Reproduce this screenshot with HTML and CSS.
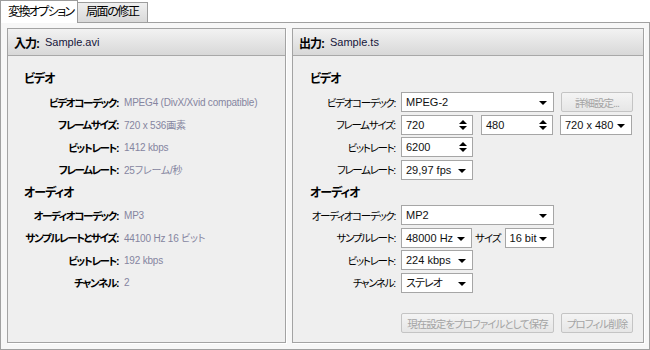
FILE: index.html
```html
<!DOCTYPE html>
<html lang="ja">
<head>
  <meta charset="UTF-8">
  <title>変換オプション</title>
  <link rel="stylesheet" href="styles.css">
</head>
<body>

<div class="tabs">
  <div class="tab active">変換オプション</div>
  <div class="tab">局面の修正</div>
</div>

<div class="page">

  <!-- 入力 -->
  <section class="panel panel-in">
    <div class="panel-head"><b class="jp">入力:</b><span class="file">Sample.avi</span></div>
    <div class="panel-body">
      <div class="sec-title jp">ビデオ</div>
      <div class="row"><span class="lbl jp">ビデオコーデック:</span><span class="val">MPEG4 (DivX/Xvid compatible)</span></div>
      <div class="row"><span class="lbl jp">フレームサイズ:</span><span class="val">720 x 536画素</span></div>
      <div class="row"><span class="lbl jp">ビットレート:</span><span class="val">1412 kbps</span></div>
      <div class="row"><span class="lbl jp">フレームレート:</span><span class="val">25フレーム/秒</span></div>
      <div class="sec-title jp">オーディオ</div>
      <div class="row"><span class="lbl jp">オーディオコーデック:</span><span class="val">MP3</span></div>
      <div class="row"><span class="lbl jp">サンプルレートとサイズ:</span><span class="val">44100 Hz 16 ビット</span></div>
      <div class="row"><span class="lbl jp">ビットレート:</span><span class="val">192 kbps</span></div>
      <div class="row"><span class="lbl jp">チャンネル:</span><span class="val">2</span></div>
    </div>
  </section>

  <!-- 出力 -->
  <section class="panel panel-out">
    <div class="panel-head"><b class="jp">出力:</b><span class="file">Sample.ts</span></div>
    <div class="panel-body">
      <div class="sec-title jp">ビデオ</div>
      <div class="row">
        <span class="lbl jp">ビデオコーデック:</span>
        <div class="combo w-full">MPEG-2<i class="arrow"></i></div>
        <button class="btn jp w-short" disabled>詳細設定...</button>
      </div>
      <div class="row">
        <span class="lbl jp">フレームサイズ:</span>
        <div class="spin w-short">720<i class="spin-arrows"></i></div>
        <div class="spin w-short gap8">480<i class="spin-arrows"></i></div>
        <div class="combo w-short">720 x 480<i class="arrow"></i></div>
      </div>
      <div class="row">
        <span class="lbl jp">ビットレート:</span>
        <div class="spin w-short">6200<i class="spin-arrows"></i></div>
      </div>
      <div class="row">
        <span class="lbl jp">フレームレート:</span>
        <div class="combo w-short">29,97 fps<i class="arrow"></i></div>
      </div>
      <div class="sec-title jp">オーディオ</div>
      <div class="row">
        <span class="lbl jp">オーディオコーデック:</span>
        <div class="combo w-full">MP2<i class="arrow"></i></div>
      </div>
      <div class="row">
        <span class="lbl jp">サンプルレート:</span>
        <div class="combo w-rate">48000 Hz<i class="arrow"></i></div>
        <span class="inline-lbl jp">サイズ</span>
        <div class="combo w-bits">16 bit<i class="arrow"></i></div>
      </div>
      <div class="row">
        <span class="lbl jp">ビットレート:</span>
        <div class="combo w-short">224 kbps<i class="arrow"></i></div>
      </div>
      <div class="row">
        <span class="lbl jp">チャンネル:</span>
        <div class="combo w-short"><span class="jp">ステレオ</span><i class="arrow"></i></div>
      </div>
      <div class="actions">
        <button class="btn jp w-full" disabled>現在設定をプロファイルとして保存</button>
        <button class="btn jp w-short" disabled>プロフィル削除</button>
      </div>
    </div>
  </section>

</div>

</body>
</html>
```

FILE: styles.css
```css
body {
  margin: 0;
  font-family: "Liberation Sans", "Noto Sans CJK JP", sans-serif;
  font-size: 11px;
  font-feature-settings: "palt";
  color: #000;
  background: #fff;
}

/* Japanese text is set tighter, like the UI font of the original */
.jp {
  letter-spacing: -1px;
  white-space: nowrap;
}

/* Tabs */
.tabs {
  display: flex;
  align-items: flex-end;
  height: 22px;
}

.tab {
  box-sizing: border-box;
  height: 20px;
  width: 71px;
  padding-left: 8px;
  line-height: 19px;
  font-size: 12px;
  letter-spacing: -1.4px;
  white-space: nowrap;
  border: 1px solid #9c9c9c;
  border-bottom: none;
  background: linear-gradient(#efefef, #d9d9d9);
  margin-left: -1px;
}

.tab.active {
  width: 78px;
  height: 23px;
  padding-left: 7px;
  margin-left: 0;
  margin-bottom: -1px;
  line-height: 23px;
  letter-spacing: -1.6px;
  background: #fff;
  position: relative;
  z-index: 1;
}

/* Page frame */
.page {
  box-sizing: border-box;
  height: 328px;
  border: 1px solid #a0a0a0;
  background: #f7f7f7;
  padding: 5px 5px 6px 6px;
  display: flex;
  gap: 6px;
}

.panel {
  box-sizing: border-box;
  border: 1px solid #a3a3a3;
  background: #efefef;
  box-shadow: 1px 1px 0 #fff;
}

.panel-in { width: 279px; }
.panel-out { flex: 1; }

.panel-head {
  box-sizing: border-box;
  height: 27px;
  display: flex;
  align-items: center;
  gap: 6px;
  padding-left: 6px;
  border-bottom: 1px solid #a8a8a8;
  background: linear-gradient(#f2f2f2, #d8d8d8);
}

.panel-head b {
  font-size: 12px;
}

.panel-head .file {
  color: #15153a;
}

.panel-body {
  padding-top: 12px;
}

.sec-title {
  height: 22px;
  line-height: 22px;
  padding-left: 16px;
  font-weight: bold;
  font-size: 12px;
  margin-bottom: 1px;
}

.panel-out .sec-title {
  padding-left: 17px;
}

.row {
  display: flex;
  align-items: center;
  height: 22.5px;
}

.row + .sec-title {
  margin-top: 1px;
  margin-bottom: 0;
}

.lbl {
  flex: none;
  text-align: right;
  margin-right: 6px;
  font-size: 10.5px;
  letter-spacing: -1.3px;
}

.panel-in .lbl {
  width: 110px;
  font-weight: bold;
  letter-spacing: -1.4px;
}

.panel-out .lbl {
  width: 102px;
}

.val {
  color: #8585a0;
  font-size: 10px;
  letter-spacing: -0.2px;
  white-space: nowrap;
}

/* Controls */
.combo,
.spin {
  box-sizing: border-box;
  position: relative;
  height: 20px;
  line-height: 18px;
  padding-left: 4px;
  border: 1px solid #a6a6a6;
  background: #fff;
  color: #111;
  white-space: nowrap;
}

.w-full { width: 153px; }
.w-short { width: 72px; }
.w-rate { width: 71px; }
.w-bits { width: 49px; }

.gap8 { margin-left: 8px; }
.row > .combo + .btn,
.row > .spin + .combo { margin-left: 7px; }

.arrow {
  position: absolute;
  right: 6px;
  top: 8px;
  border-left: 4px solid transparent;
  border-right: 4px solid transparent;
  border-top: 4px solid #000;
}

.spin-arrows {
  position: absolute;
  right: 9px;
  top: 4px;
  width: 0;
  height: 10px;
}

.spin-arrows::before,
.spin-arrows::after {
  content: "";
  position: absolute;
  left: -4px;
  border-left: 4px solid transparent;
  border-right: 4px solid transparent;
}

.spin-arrows::before {
  top: 0;
  border-bottom: 4px solid #000;
}

.spin-arrows::after {
  bottom: 0;
  border-top: 4px solid #000;
}

.inline-lbl {
  margin: 0 4px 0 3px;
  font-size: 10.5px;
}

.btn {
  box-sizing: border-box;
  height: 20px;
  padding: 0;
  font: inherit;
  font-size: 10.5px;
  font-feature-settings: "palt";
  color: #a4a4a4;
  border: 1px solid #c4c4c4;
  border-radius: 2px;
  background: linear-gradient(#f4f4f4, #e6e6e6);
}

.actions {
  display: flex;
  gap: 7px;
  margin-top: 19px;
  padding-left: 108px;
}
```
